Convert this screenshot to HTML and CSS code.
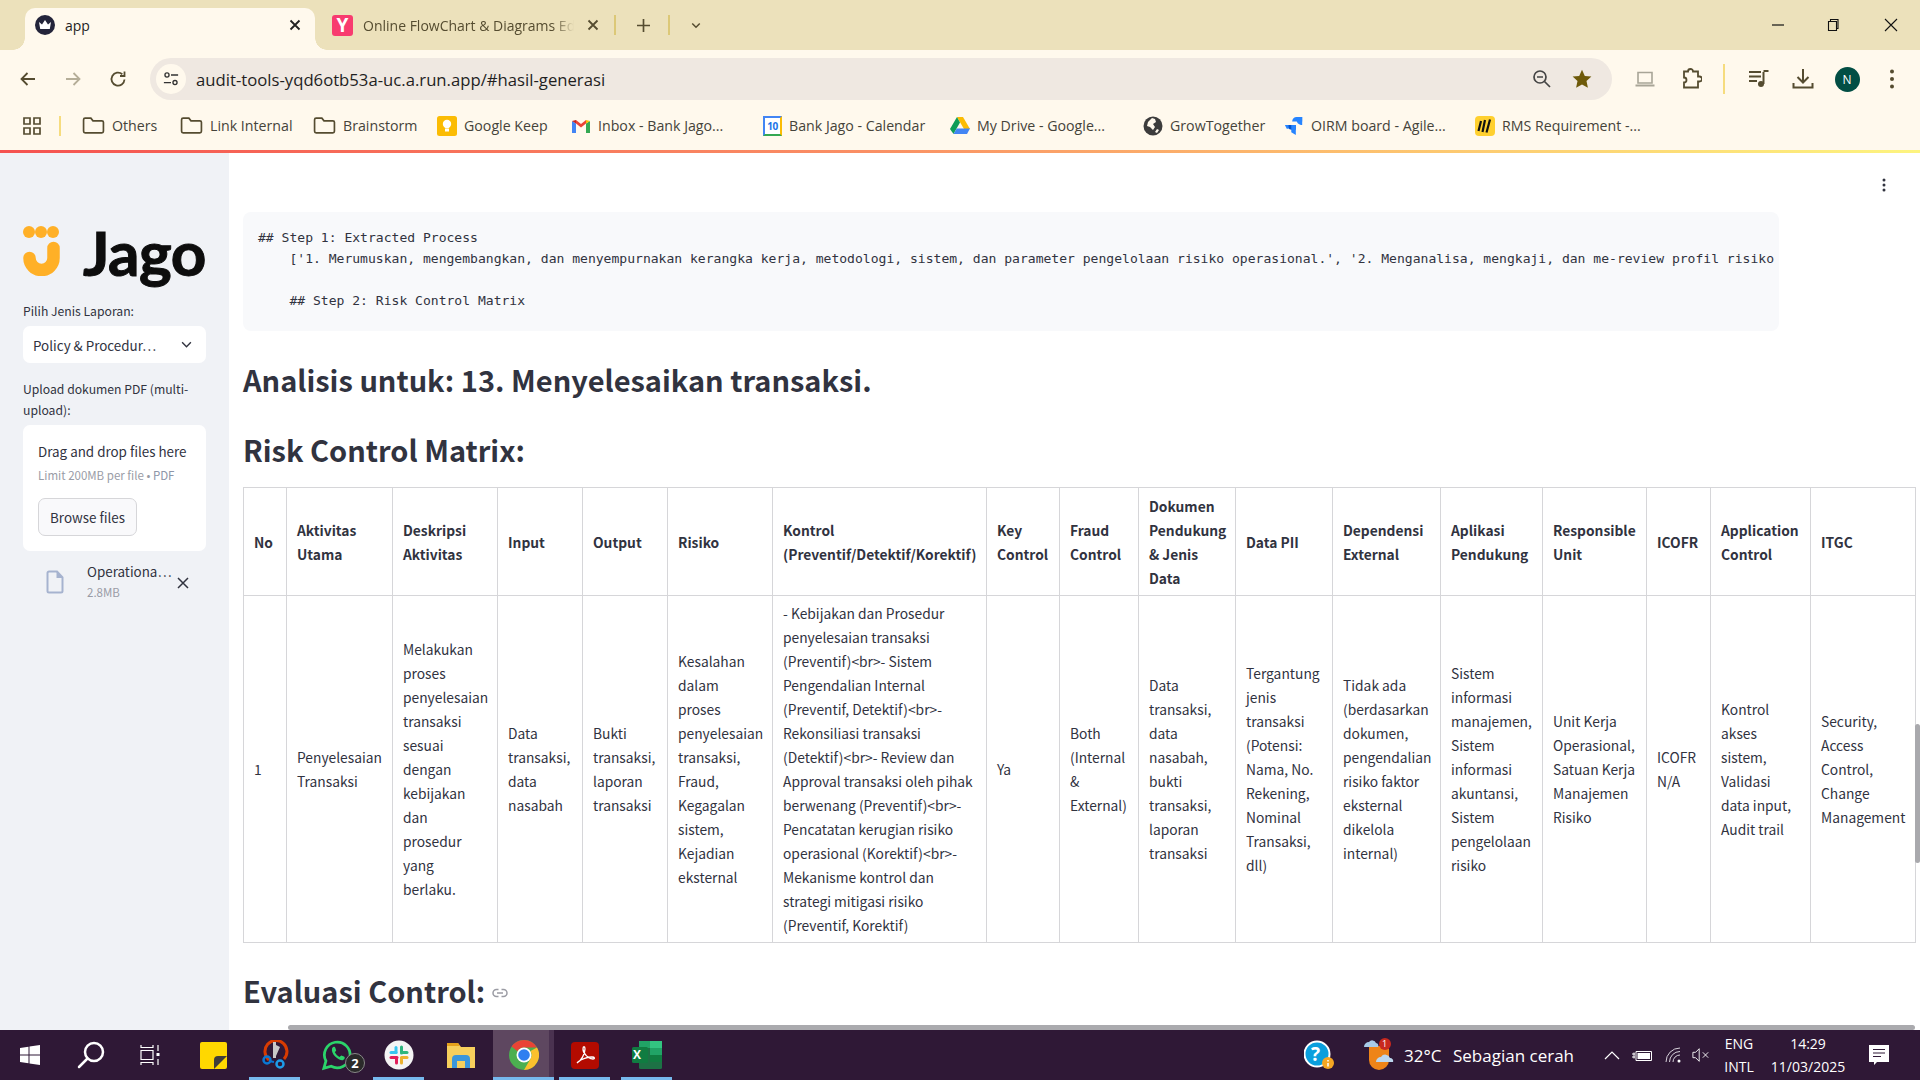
FILE: index.html
```html
<!DOCTYPE html>
<html lang="id">
<head>
<meta charset="utf-8">
<title>app</title>
<link rel="stylesheet" href="styles.css">
</head>
<body>
<header class="browser">
  <div class="tabstrip">
    <div class="tab tab-active">
      <svg class="fav" viewBox="0 0 20 20"><circle cx="10" cy="10" r="10" fill="#23243a"/><path d="M4 7l3 2.400L10 5l3 4.400L16 7l-1.200 7H5.200z" fill="#fff"/></svg>
      <span class="tab-title">app</span>
      <svg class="tab-x" viewBox="0 0 12 12"><path d="M1.500 1.500l9 9M10.500 1.500l-9 9" stroke="#222" stroke-width="1.800" fill="none"/></svg>
    </div>
    <div class="tab tab-other">
      <span class="fav-y">Y</span>
      <span class="tab-title tab-fade">Online FlowChart &amp; Diagrams Editor</span>
      <svg class="tab-x" viewBox="0 0 12 12"><path d="M1.500 1.500l9 9M10.500 1.500l-9 9" stroke="#554c30" stroke-width="1.800" fill="none"/></svg>
    </div>
    <span class="strip-div"></span>
    <svg class="strip-plus" viewBox="0 0 14 14"><path d="M7 0v14M0 7h14" stroke="#554c30" stroke-width="1.800"/></svg>
    <span class="strip-div"></span>
    <svg class="strip-chev" viewBox="0 0 12 8"><path d="M1.500 1.500L6 6l4.500-4.500" stroke="#554c30" stroke-width="1.800" fill="none"/></svg>
    <div class="winctl">
      <svg class="win-btn" viewBox="0 0 14 14"><path d="M1 7h12" stroke="#111" stroke-width="1.200"/></svg>
      <svg class="win-btn" viewBox="0 0 14 14"><path d="M2.500 3.500h8v9h-8zM4.500 3.500v-2h7.500v9h-1.500" stroke="#111" stroke-width="1.100" fill="none"/></svg>
      <svg class="win-btn" viewBox="0 0 14 14"><path d="M1 1l12 12M13 1L1 13" stroke="#111" stroke-width="1.100"/></svg>
    </div>
  </div>
  <div class="toolbar">
    <svg class="nav" viewBox="0 0 18 18"><path d="M16 9H3M8.500 3L2.500 9l6 6" stroke="#554c30" stroke-width="1.800" fill="none"/></svg>
    <svg class="nav" viewBox="0 0 18 18"><path d="M2 9h13M9.500 3l6 6-6 6" stroke="#b5ae98" stroke-width="1.800" fill="none"/></svg>
    <svg class="nav" viewBox="0 0 18 18"><path d="M15.500 9.500A6.500 6.500 0 1 1 13.300 4.200M15.500 1.500v4.500H11" stroke="#554c30" stroke-width="1.800" fill="none"/></svg>
    <div class="omnibox">
      <span class="site-btn"><svg viewBox="0 0 18 18"><circle cx="4.500" cy="4.500" r="2.300" fill="none" stroke="#333" stroke-width="1.500"/><path d="M9 4.500h8M1 13h8" stroke="#333" stroke-width="1.500"/><circle cx="13.500" cy="13" r="2.300" fill="none" stroke="#333" stroke-width="1.500"/></svg></span>
      <span class="url">audit-tools-yqd6otb53a-uc.a.run.app/#hasil-generasi</span>
      <svg class="omni-zoom" viewBox="0 0 20 20"><circle cx="8" cy="8" r="6" fill="none" stroke="#444" stroke-width="1.700"/><path d="M5 8h6M12.500 12.500L18 18" stroke="#444" stroke-width="1.700"/></svg>
      <svg class="omni-star" viewBox="0 0 20 20"><path d="M10 .8l2.800 6.100 6.600.7-4.900 4.500 1.400 6.600L10 15.400l-5.900 3.300 1.400-6.600L.6 7.600l6.600-.7z" fill="#6e5a0a"/></svg>
    </div>
    <div class="tool-icons">
      <svg class="tool tool-laptop" viewBox="0 0 22 18"><path d="M4 2.500h14v10.500H4z" fill="none" stroke="#a8a597" stroke-width="1.600"/><path d="M1.500 15.500h19" stroke="#a8a597" stroke-width="2"/></svg>
      <svg class="tool" viewBox="0 0 22 22"><path d="M8 3.500a2.500 2.500 0 0 1 5 0h5v5h1.500a2 2 0 0 1 0 5H18v6H4v-5a2.500 2.500 0 0 0 0-5V3.500z" fill="none" stroke="#554c30" stroke-width="1.800"/></svg>
      <span class="tool-div"></span>
      <svg class="tool tool-media" viewBox="0 0 22 22"><path d="M1 4h12M1 8.500h12M1 13h8" stroke="#554c30" stroke-width="2"/><path d="M15.500 4v12" stroke="#554c30" stroke-width="2"/><path d="M15.500 3h5" stroke="#554c30" stroke-width="2"/><circle cx="13" cy="16" r="3" fill="#554c30"/></svg>
      <svg class="tool tool-dl" viewBox="0 0 22 22"><path d="M11 1v13M5.500 9l5.500 5.500L16.500 9" stroke="#554c30" stroke-width="2" fill="none"/><path d="M1.500 15v4.500h19V15" stroke="#554c30" stroke-width="2" fill="none"/></svg>
      <span class="avatar">N</span>
      <svg class="tool tool-dots" viewBox="0 0 6 22"><circle cx="3" cy="3.500" r="2" fill="#554c30"/><circle cx="3" cy="11" r="2" fill="#554c30"/><circle cx="3" cy="18.500" r="2" fill="#554c30"/></svg>
    </div>
  </div>
  <nav class="bookmarks">
    <svg class="bm-apps" viewBox="0 0 18 18"><path d="M1 1h6v6H1zM11 1h6v6h-6zM1 11h6v6H1zM11 11h6v6h-6z" fill="none" stroke="#554c30" stroke-width="1.700"/></svg>
    <span class="bm-div"></span>
    <a class="bm bm-a"><svg class="bm-ico folder" viewBox="0 0 22 18"><path d="M1.500 3.500a1.500 1.500 0 0 1 1.500-1.500h5.500l2 2.500H19a1.500 1.500 0 0 1 1.500 1.500v8.500a1.500 1.500 0 0 1-1.500 1.500H3a1.500 1.500 0 0 1-1.500-1.500z" fill="none" stroke="#554c30" stroke-width="1.600"/></svg>Others</a>
    <a class="bm bm-b"><svg class="bm-ico folder" viewBox="0 0 22 18"><path d="M1.500 3.500a1.500 1.500 0 0 1 1.500-1.500h5.500l2 2.500H19a1.500 1.500 0 0 1 1.500 1.500v8.500a1.500 1.500 0 0 1-1.500 1.500H3a1.500 1.500 0 0 1-1.500-1.500z" fill="none" stroke="#554c30" stroke-width="1.600"/></svg>Link Internal</a>
    <a class="bm bm-c"><svg class="bm-ico folder" viewBox="0 0 22 18"><path d="M1.500 3.500a1.500 1.500 0 0 1 1.500-1.500h5.500l2 2.500H19a1.500 1.500 0 0 1 1.500 1.500v8.500a1.500 1.500 0 0 1-1.500 1.500H3a1.500 1.500 0 0 1-1.500-1.500z" fill="none" stroke="#554c30" stroke-width="1.600"/></svg>Brainstorm</a>
    <a class="bm bm-d"><svg class="bm-ico" viewBox="0 0 20 20"><rect width="20" height="20" rx="2.500" fill="#fbbc04"/><circle cx="10" cy="8" r="4.200" fill="#fff"/><rect x="8" y="12.500" width="4" height="3" fill="#fff"/></svg>Google Keep</a>
    <a class="bm bm-e"><svg class="bm-ico" viewBox="0 0 20 16"><path d="M1 15V3l4 2.500V15z" fill="#4285f4"/><path d="M19 15V3l-4 2.500V15z" fill="#34a853"/><path d="M5 5.500V2L10 6l5-4v3.500L10 9.500z" fill="#ea4335"/><path d="M1 3l4-1v3.500z" fill="#c5221f"/><path d="M19 3l-4-1v3.500z" fill="#fbbc04"/></svg>Inbox - Bank Jago...</a>
    <a class="bm bm-f"><span class="bm-cal">10</span>Bank Jago - Calendar</a>
    <a class="bm bm-g"><svg class="bm-ico" viewBox="0 0 20 18"><path d="M7 0h6l7 12h-6z" fill="#fbbc04"/><path d="M7 0l3 5.500L3.500 17 0 12z" fill="#0f9d58"/><path d="M3.500 17l3.200-5.500H20L17 17z" fill="#4285f4"/></svg>My Drive - Google...</a>
    <a class="bm bm-h"><svg class="bm-ico" viewBox="0 0 20 20"><circle cx="10" cy="10" r="9.500" fill="#3c3c3c"/><path d="M9 2l3 1 1 3-3 2 2 3-2 3-3-3-3-1 1-4zM14 13l2 1-2 3-2-1z" fill="#fff9ed"/></svg>GrowTogether</a>
    <a class="bm bm-i"><svg class="bm-ico" viewBox="0 0 20 22"><path d="M8 6h11V1l-6 0c-3 0-5 2-5 5z" fill="#2684ff"/><path d="M13 1h6v9c-3 0-6-2-6-5z" fill="#2684ff"/><path d="M3 10h9v5H7c-3 0-4-2-4-5z" fill="#0052cc"/><path d="M7 10h5v11l-5-3z" fill="#2684ff"/><path d="M0 10h4v4H2z" fill="#2684ff"/></svg>OIRM board - Agile...</a>
    <a class="bm bm-j"><svg class="bm-ico" viewBox="0 0 20 20"><rect width="20" height="20" rx="4" fill="#ffd02f"/><path d="M6 5L3.500 15M10 4L7.500 16M15 3.500L11.500 16.500" stroke="#111" stroke-width="2.200"/></svg>RMS Requirement -...</a>
  </nav>
  <div class="loadbar"></div>
</header>

<div class="app">
  <aside class="sidebar">
    <div class="logo">
      <svg class="logo-mark" viewBox="0 0 37 50"><circle cx="6" cy="6" r="6" fill="#ffb027"/><circle cx="18" cy="6" r="6" fill="#ffb027"/><circle cx="30" cy="6" r="6" fill="#ffb027"/><path d="M30.500 22v10a12 12 0 0 1-24 0" fill="none" stroke="#ffb027" stroke-width="12.500" stroke-linecap="round"/></svg>
      <span class="logo-word">Jago</span>
    </div>
    <label class="field-label">Pilih Jenis Laporan:</label>
    <div class="select">
      <span>Policy &amp; Procedur…</span>
      <svg viewBox="0 0 12 8"><path d="M1 1.500L6 6.500l5-5" stroke="#31333f" stroke-width="1.600" fill="none"/></svg>
    </div>
    <label class="field-label upload-label">Upload dokumen PDF (multi-upload):</label>
    <div class="dropzone">
      <div class="drop-title">Drag and drop files here</div>
      <div class="drop-sub">Limit 200MB per file • <span class="drop-pdf">PDF</span></div>
      <button class="browse">Browse files</button>
    </div>
    <div class="file-row">
      <svg class="file-ico" viewBox="0 0 18 24"><path d="M1.500 3a1.500 1.500 0 0 1 1.500-1.500h8l5.500 6V21a1.500 1.500 0 0 1-1.500 1.500H3A1.500 1.500 0 0 1 1.500 21z" fill="none" stroke="#a6b3cf" stroke-width="2"/><path d="M10.500 1.500v6.500h6.500z" fill="#a6b3cf"/></svg>
      <div class="file-meta">
        <div class="file-name">Operationa…</div>
        <div class="file-size">2.8MB</div>
      </div>
      <svg class="file-x" viewBox="0 0 12 12"><path d="M1 1l10 10M11 1L1 11" stroke="#31333f" stroke-width="1.500"/></svg>
    </div>
  </aside>

  <main class="main">
    <svg class="main-menu" viewBox="0 0 4 14"><circle cx="2" cy="2" r="1.500" fill="#31333f"/><circle cx="2" cy="7" r="1.500" fill="#31333f"/><circle cx="2" cy="12" r="1.500" fill="#31333f"/></svg>
    <pre class="code">## Step 1: Extracted Process
    ['1. Merumuskan, mengembangkan, dan menyempurnakan kerangka kerja, metodologi, sistem, dan parameter pengelolaan risiko operasional.', '2. Menganalisa, mengkaji, dan me-review profil risiko

    ## Step 2: Risk Control Matrix</pre>
    <h3 class="h-analisis">Analisis untuk: 13. Menyelesaikan transaksi.</h3>
    <h3 class="h-risk">Risk Control Matrix:</h3>
    <table class="rcm">
      <colgroup>
        <col class="c1"><col class="c2"><col class="c3"><col class="c4"><col class="c5"><col class="c6"><col class="c7"><col class="c8"><col class="c9"><col class="c10"><col class="c11"><col class="c12"><col class="c13"><col class="c14"><col class="c15"><col class="c16"><col class="c17">
      </colgroup>
      <thead>
        <tr>
          <th>No</th><th>Aktivitas Utama</th><th>Deskripsi Aktivitas</th><th>Input</th><th>Output</th><th>Risiko</th><th>Kontrol (Preventif/Detektif/Korektif)</th><th>Key Control</th><th>Fraud Control</th><th>Dokumen Pendukung &amp; Jenis Data</th><th>Data PII</th><th>Dependensi External</th><th>Aplikasi Pendukung</th><th>Responsible Unit</th><th>ICOFR</th><th>Application Control</th><th>ITGC</th>
        </tr>
      </thead>
      <tbody>
        <tr>
          <td>1</td>
          <td>Penyelesaian Transaksi</td>
          <td>Melakukan proses penyelesaian transaksi sesuai dengan kebijakan dan prosedur yang berlaku.</td>
          <td>Data transaksi, data nasabah</td>
          <td>Bukti transaksi, laporan transaksi</td>
          <td>Kesalahan dalam proses penyelesaian transaksi, Fraud, Kegagalan sistem, Kejadian eksternal</td>
          <td>- Kebijakan dan Prosedur penyelesaian transaksi (Preventif)&lt;br&gt;- Sistem Pengendalian Internal (Preventif, Detektif)&lt;br&gt;- Rekonsiliasi transaksi (Detektif)&lt;br&gt;- Review dan Approval transaksi oleh pihak berwenang (Preventif)&lt;br&gt;- Pencatatan kerugian risiko operasional (Korektif)&lt;br&gt;- Mekanisme kontrol dan strategi mitigasi risiko (Preventif, Korektif)</td>
          <td>Ya</td>
          <td>Both (Internal &amp; External)</td>
          <td>Data transaksi, data nasabah, bukti transaksi, laporan transaksi</td>
          <td>Tergantung jenis transaksi (Potensi: Nama, No. Rekening, Nominal Transaksi, dll)</td>
          <td>Tidak ada (berdasarkan dokumen, pengendalian risiko faktor eksternal dikelola internal)</td>
          <td>Sistem informasi manajemen, Sistem informasi akuntansi, Sistem pengelolaan risiko</td>
          <td>Unit Kerja Operasional, Satuan Kerja Manajemen Risiko</td>
          <td>ICOFR N/A</td>
          <td>Kontrol akses sistem, Validasi data input, Audit trail</td>
          <td>Security, Access Control, Change Management</td>
        </tr>
      </tbody>
    </table>
    <h3 class="h-eval">Evaluasi Control: <svg class="anchor" viewBox="0 0 16 10"><path d="M6.500 1.500H4.500a3.500 3.500 0 0 0 0 7h2M9.500 1.500h2a3.500 3.500 0 0 1 0 7h-2M5 5h6" fill="none" stroke="#9a9ba3" stroke-width="1.500"/></svg></h3>
    <div class="scroll-h"></div>
    <div class="scroll-v"></div>
  </main>
</div>

<footer class="taskbar">
  <span class="tb tb-start"><svg viewBox="0 0 20 20"><path d="M0 3l8.500-1.200v7.700H0zM9.500 1.600L20 0v9.500H9.500zM0 10.500h8.500v7.700L0 17zM9.500 10.500H20V20L9.500 18.400z" fill="#fff"/></svg></span>
  <span class="tb tb-search"><svg viewBox="0 0 28 28"><circle cx="17" cy="11" r="9" fill="none" stroke="#fff" stroke-width="2.500"/><path d="M10.500 17.500L2 26" stroke="#fff" stroke-width="2.500" stroke-linecap="round"/></svg></span>
  <span class="tb tb-view"><svg viewBox="0 0 20 20"><path d="M1 0v2.500h12V0M1 20v-2.500h12V20M1 5.500h12v9H1z" fill="none" stroke="#fff" stroke-width="1.200"/><path d="M18 0v6M18 14v6" stroke="#fff" stroke-width="1.200"/><rect x="16.500" y="8" width="3" height="3" fill="#fff"/></svg></span>
  <span class="tb tb-sticky"><svg viewBox="0 0 27 27"><rect width="27" height="27" rx="2" fill="#ffd800"/><path d="M14 27V18a4 4 0 0 1 4-4h9L14 27z" fill="#3f3d3a"/></svg></span>
  <span class="tb tb-snip tb-open"><svg viewBox="0 0 28 30"><path d="M8 20A11 11 0 1 1 23 19" fill="none" stroke="#d83b01" stroke-width="3"/><path d="M12 2h3v16h-3zM15 5l4 2-4 9z" fill="#c8c8c8"/><circle cx="6" cy="20" r="3.500" fill="none" stroke="#0a78d4" stroke-width="2.500"/><circle cx="19" cy="24" r="3.500" fill="none" stroke="#1e9ce8" stroke-width="2.500"/><path d="M8 21l5 1" stroke="#0a78d4" stroke-width="2"/></svg></span>
  <span class="tb tb-wa"><svg viewBox="0 0 36 36"><path d="M2 32l2.300-8A14 14 0 1 1 10 29.700z" fill="none" stroke="#2bd46a" stroke-width="3"/><path d="M11 10c1.500-2 3-2 3.500-.5l1 3-1.500 2c1 2 3 4 5 5l2-1.500 3 1c1.500 1 1 2.500-1 4-3 1.500-14-6-12-13z" fill="#2bd46a"/></svg><span class="wa-badge">2</span></span>
  <span class="tb tb-slack tb-open"><svg viewBox="0 0 30 30"><circle cx="15" cy="15" r="14.500" fill="#f4f4f4"/><path d="M12 7.500v5" stroke="#36c5f0" stroke-width="3" stroke-linecap="round"/><path d="M7 12.500h5" stroke="#36c5f0" stroke-width="3" stroke-linecap="round"/><path d="M17.500 7v6" stroke="#2eb67d" stroke-width="3" stroke-linecap="round"/><path d="M18 12.500h5" stroke="#2eb67d" stroke-width="3" stroke-linecap="round"/><path d="M7 17.500h6" stroke="#e01e5a" stroke-width="3" stroke-linecap="round"/><path d="M12.500 18v5" stroke="#e01e5a" stroke-width="3" stroke-linecap="round"/><path d="M17.500 17.500H23" stroke="#ecb22e" stroke-width="3" stroke-linecap="round"/><path d="M17.500 18v5" stroke="#ecb22e" stroke-width="3" stroke-linecap="round"/></svg></span>
  <span class="tb tb-folder"><svg viewBox="0 0 28 27"><path d="M0 1h11l3 4h14v21H0z" fill="#f7cf5c"/><path d="M0 1h11l2 3H0z" fill="#e5a11c"/><path d="M5 26V17a4 4 0 0 1 4-4h10a4 4 0 0 1 4 4v9h-5v-7h-8v7z" fill="#3b96db"/></svg></span>
  <span class="tb tb-chrome tb-open tb-active"><svg viewBox="0 0 30 30"><circle cx="15" cy="15" r="15" fill="#4caf50"/><path d="M15 0a15 15 0 0 1 13 7.500H15A7.500 7.500 0 0 0 8.500 11.200L2.600 6.500A15 15 0 0 1 15 0z" fill="#ea4335"/><path d="M28 7.500A15 15 0 0 1 15 30l6.500-11.300A7.500 7.500 0 0 0 21.500 11z" fill="#fbc02d"/><circle cx="15" cy="15" r="7.500" fill="#fff"/><circle cx="15" cy="15" r="5.800" fill="#2f7ff0"/></svg></span>
  <span class="tb tb-acro tb-open"><svg viewBox="0 0 28 27"><rect width="28" height="27" rx="4" fill="#b30b00"/><path d="M6 21c4-2 8-9 8-14 0-3-2-3-2 0 0 5 6 10 10 10 2 0 2-2-1-2-4 0-11 2-14 5z" fill="none" stroke="#fff" stroke-width="1.300"/></svg></span>
  <span class="tb tb-excel tb-open"><svg viewBox="0 0 30 30"><rect x="7" y="1" width="23" height="28" rx="1.500" fill="#1d7145"/><rect x="18" y="1" width="12" height="7" fill="#33c481"/><rect x="7" y="1" width="11" height="7" fill="#21a366"/><rect x="18" y="8" width="12" height="7" fill="#21a366"/><rect x="18" y="15" width="12" height="7" fill="#107c41"/><rect x="0" y="7" width="16" height="16" rx="1.500" fill="#107c41"/></svg><span class="xl-x">X</span></span>
  <div class="tray">
    <span class="help"><svg viewBox="0 0 30 30"><circle cx="13" cy="14" r="12.500" fill="#0a9fdd" stroke="#fff" stroke-width="2"/><circle cx="24" cy="23" r="6" fill="#f5a623"/><path d="M24 20v1.500M24 23v3.500" stroke="#fff" stroke-width="1.500"/></svg><span class="help-q">?</span></span>
    <span class="weather"><svg viewBox="0 0 30 34"><path d="M5 8h20v14a10 10 0 0 1-20 0z" fill="#ee8418"/><circle cx="21" cy="6" r="6" fill="#c8281e"/><path d="M0 9a5 5 0 0 1 5-5 4 4 0 0 1 7 1 3 3 0 0 1 2 4z" fill="#a7cbe8"/><path d="M12 24a5 5 0 0 1 5-5 5 5 0 0 1 9 1 3 3 0 0 1 3 4z" fill="#bcd7ee"/></svg><span class="w-badge">1</span></span>
    <span class="temp">32°C</span>
    <span class="wtext">Sebagian cerah</span>
    <svg class="t-caret" viewBox="0 0 16 9"><path d="M1 8l7-7 7 7" fill="none" stroke="#fff" stroke-width="1.200"/></svg>
    <svg class="t-batt" viewBox="0 0 20 13"><path d="M4 2.500h15.500v9H4z" fill="none" stroke="#fff"/><rect x="5.500" y="4" width="12.500" height="6" fill="#fff"/><path d="M0 5h3M0 8h3M2 3.500v6" stroke="#fff"/></svg>
    <svg class="t-wifi" viewBox="0 0 16 16"><path d="M1 15A14 14 0 0 1 15 1M4.500 15A10.500 10.500 0 0 1 15 4.500M8 15a7 7 0 0 1 7-7" fill="none" stroke="#d9d3dc"/><circle cx="14" cy="14" r="1.500" fill="#fff"/></svg>
    <svg class="t-vol" viewBox="0 0 20 16"><path d="M1 5h3l4-4v14l-4-4H1z" fill="none" stroke="#fff"/><path d="M12 5l6 6M18 5l-6 6" stroke="#fff"/></svg>
    <div class="lang"><span>ENG</span><span>INTL</span></div>
    <div class="clock"><span>14:29</span><span>11/03/2025</span></div>
    <svg class="t-note" viewBox="0 0 20 21"><path d="M0 0h20v17H8l-3 3v-3H0z" fill="#fff"/><path d="M4 4.500h12M4 8h12M4 11.500h8" stroke="#2f1836"/></svg>
  </div>
</footer>
</body>
</html>
```

FILE: styles.css
```css
* { box-sizing: border-box; }
html, body { margin: 0; height: 100%; }
body {
  width: 1920px; height: 1080px; overflow: hidden;
  display: flex; flex-direction: column;
  font-family: "Noto Sans CJK JP", "Noto Sans", sans-serif;
  color: #31333f; background: #fff;
}
svg { display: block; flex: none; }

/* Browser chrome */
.browser { flex: none; height: 153px; background: #fff9ed; font-family: "Open Sans", "Noto Sans", sans-serif; }
.tabstrip { height: 50px; background: #ece1bb; display: flex; padding: 8px 0 0 25px; align-items: stretch; }
.tab { display: flex; align-items: center; position: relative; flex: none; padding-bottom: 8px; }
.tab-active { width: 290px; background: #fff9ed; border-radius: 10px 10px 0 0; padding-left: 10px; }
.tab-active::before, .tab-active::after { content: ""; position: absolute; bottom: 0; width: 12px; height: 12px; }
.tab-active::before { left: -12px; background: radial-gradient(circle at 0 0, transparent 11.500px, #fff9ed 12px); }
.tab-active::after { right: -12px; background: radial-gradient(circle at 100% 0, transparent 11.500px, #fff9ed 12px); }
.fav { width: 20px; height: 20px; margin-right: 10px; }
.tab-title { font-size: 14px; color: #1f1f1f; flex: 1; white-space: nowrap; overflow: hidden; }
.tab-x { width: 12px; height: 12px; margin-right: 14px; }
.tab-other { width: 284px; padding-left: 17px; }
.tab-other .tab-x { margin-right: 0; margin-left: 13px; }
.tab-fade { color: #554c30; -webkit-mask-image: linear-gradient(90deg, #000 90%, transparent 100%); mask-image: linear-gradient(90deg, #000 90%, transparent 100%); }
.fav-y { width: 21px; height: 21px; margin-right: 10px; background: #f83b6f; color: #fff; border-radius: 3px; font: 700 19px/21px "Open Sans", sans-serif; text-align: center; }
.strip-div { width: 2px; height: 20px; background: #dcc877; margin-top: 7px; }
.strip-plus { width: 13px; height: 13px; margin: 11px 18px 0 21px; }
.strip-chev { width: 10px; height: 7px; margin: 14px 0 0 21px; }
.tab-other + .strip-div { margin-left: 15px; }
.winctl { margin-left: auto; display: flex; gap: 41px; padding: 10px 22px 0 0; }
.win-btn { width: 14px; height: 14px; }
.win-btn + .win-btn + .win-btn { margin-left: 3px; }

.toolbar { height: 50px; background: #fff9ed; border-radius: 10px 10px 0 0; display: flex; align-items: center; padding: 0 0 0 5px; position: relative; }
.nav { width: 18px; height: 18px; margin: 8px 13.500px 0; }
.omnibox { width: 1462px; height: 42px; margin: 8px 0 0 10px; background: #efe8e1; border-radius: 21px; display: flex; align-items: center; padding-left: 6px; flex: none; }
.site-btn { width: 30px; height: 30px; border-radius: 50%; background: #fff9ed; display: flex; align-items: center; justify-content: center; }
.site-btn svg { width: 16px; height: 16px; }
.url { font-size: 16.700px; color: #1f1f1f; margin-left: 10px; flex: 1; }
.omni-zoom { width: 20px; height: 20px; margin-right: 20px; }
.omni-star { width: 20px; height: 20px; margin-right: 20px; }
.tool-icons { display: flex; align-items: center; margin-top: 8px; margin-left: 21.500px; }
.tool { width: 22px; height: 22px; }
.tool-laptop { height: 18px; margin-right: 24px; }
.tool-div { width: 2px; height: 30px; background: #f6dc7e; margin: 0 22.500px 0 21.500px; }
.tool-dl { margin: 0 21px 0 22px; }
.tool-dots { width: 6px; margin-left: 29px; }
.avatar { width: 25px; height: 25px; border-radius: 50%; background: #024e44; color: #fff; font-size: 12px; text-align: center; line-height: 25px; flex: none; }

.bookmarks { height: 48px; display: flex; align-items: center; padding-left: 23px; padding-top: 3px; }
.bm-apps { width: 18px; height: 18px; }
.bm-div { width: 2px; height: 20px; background: #f6dc7e; margin: 0 21px 0 18px; }
.bm { display: flex; align-items: center; gap: 7px; font-size: 14.200px; color: #45433a; flex: none; white-space: nowrap; }
.bm-ico { width: 20px; height: 20px; }
.folder { width: 23px; height: 19px; }
.bm-a { width: 98px; } .bm-b { width: 133px; } .bm-c { width: 124px; } .bm-d { width: 134px; }
.bm-e { width: 192px; } .bm-f { width: 187px; } .bm-g { width: 193px; } .bm-h { width: 141px; }
.bm-i { width: 191px; }
.bm-cal { width: 19px; height: 20px; border: 2px solid #4285f4; border-bottom-color: #34a853; border-right-color: #fbbc04; background: #fff; color: #1a73e8; font-size: 10px; font-weight: 700; text-align: center; line-height: 16px; letter-spacing: -.5px; }
.loadbar { height: 3px; margin-top: 2px; background: linear-gradient(90deg, #f55250 0%, #fa8f64 45%, #fdc870 75%, #fdf47f 100%); }

/* App */
.app { flex: 1; min-height: 0; display: flex; overflow: hidden; }
.sidebar { width: 229px; flex: none; background: #f0f2f6; padding: 73px 23px 0; font-size: 12px; }
.logo { display: flex; align-items: flex-start; height: 73px; }
.logo-mark { width: 37px; height: 50px; }
.logo-word { font: 700 62px/58px "Lato", sans-serif; color: #0d0d0d; margin: -3px 0 0 23px; -webkit-text-stroke: 1px #0d0d0d; letter-spacing: -.5px; }
.field-label { display: block; font-size: 12.200px; line-height: 21px; color: #31333f; margin-top: 2px; }
.select { height: 37px; margin-top: 4px; background: #fff; border-radius: 7px; display: flex; align-items: center; justify-content: space-between; padding: 0 14px 0 10px; font-size: 13.400px; }
.select svg { width: 11px; height: 7px; }
.upload-label { margin-top: 16px; }
.dropzone { margin-top: 4px; height: 126px; background: #fff; border-radius: 7px; padding: 15px 15px 0; }
.drop-title { font-size: 13.400px; line-height: 22px; }
.drop-sub { font-size: 11.500px; line-height: 18px; margin-top: 4px; color: #9a9ca6; }
.drop-pdf { color: #8d96a8; }
.browse { display: block; width: 99px; height: 38px; margin-top: 14px; border: 1px solid #d6d6d9; border-radius: 7px; background: #f9f9fb; color: #31333f; font: 13.400px "Noto Sans CJK JP", sans-serif; padding: 0; }
.file-row { display: flex; align-items: center; padding: 10px 0 0 23px; }
.file-ico { width: 18px; height: 24px; }
.file-meta { margin-left: 23px; width: 87px; }
.file-name { font-size: 13.400px; line-height: 21px; white-space: nowrap; }
.file-size { font-size: 11.500px; line-height: 21px; color: #9a9ca6; }
.file-x { width: 12px; height: 12px; margin-left: 3px; margin-top: 2px; }

.main { flex: 1; min-width: 0; position: relative; padding: 59px 0 0 14px; overflow: hidden; }
.main-menu { position: absolute; top: 25px; right: 34px; width: 4px; height: 14px; }
.code { margin: 0; width: 1536px; height: 119px; padding: 15px 2px 0 15px; background: #f8f9fb; border-radius: 8px; font: 13.050px/21px "DejaVu Sans Mono", monospace; color: #31333f; overflow: hidden; white-space: pre; }
h3 { margin: 0; font-weight: 700; font-size: 29px; line-height: 44px; color: #31333f; }
.h-analisis { margin-top: 26px; }
.h-risk { margin-top: 26px; }
.rcm { margin-top: 16px; width: 1672px; border-collapse: collapse; table-layout: fixed; font-size: 13.800px; line-height: 24px; }
.rcm th, .rcm td { border: 1px solid #d6d6d9; padding: 5px 8px 5px 10px; text-align: left; vertical-align: middle; }
.rcm th { font-weight: 700; color: #31333f; height: 108px; }
.rcm td { height: 347px; }
.c1 { width: 43px; } .c2 { width: 106px; } .c3 { width: 105px; } .c4 { width: 85px; } .c5 { width: 85px; }
.c6 { width: 105px; } .c7 { width: 214px; } .c8 { width: 73px; } .c9 { width: 79px; } .c10 { width: 97px; }
.c11 { width: 97px; } .c12 { width: 108px; } .c13 { width: 102px; } .c14 { width: 104px; } .c15 { width: 64px; }
.c16 { width: 100px; } .c17 { width: 105px; }
.h-eval { margin-top: 25px; display: flex; align-items: center; gap: 7px; }
.anchor { width: 16px; height: 10px; margin-top: 6px; }
.scroll-h { position: absolute; left: 59px; right: 5px; bottom: 0; height: 5px; background: #aaaaae; border-radius: 3px; }
.scroll-v { position: absolute; right: 0; top: 571px; width: 5px; height: 139px; background: #a9a9ad; border-radius: 3px; }

/* Taskbar */
.taskbar { flex: none; height: 50px; background: #2f1836; display: flex; align-items: center; color: #fff; font-family: "Open Sans", "Noto Sans", sans-serif; }
.tb { position: relative; flex: none; width: 62px; height: 50px; display: flex; align-items: center; justify-content: center; }
.tb-open::after { content: ""; position: absolute; bottom: 0; left: 5px; right: 6px; height: 3px; background: #76b9ed; }
.tb-start { width: 60px; } .tb-start svg { width: 20px; height: 20px; }
.tb-search { width: 62px; } .tb-search svg { width: 28px; height: 28px; }
.tb-view { width: 56px; margin-right: 4px; } .tb-view svg { width: 20px; height: 20px; }
.tb-sticky { width: 62px; } .tb-sticky svg { width: 27px; height: 27px; }
.tb-snip svg { width: 28px; height: 30px; }
.tb-wa svg { width: 33px; height: 33px; margin-left: 3px; }
.wa-badge { position: absolute; left: 39px; top: 23px; width: 20px; height: 20px; border-radius: 50%; background: #2a2a2a; border: 1px solid #888; font-size: 13px; font-weight: 700; line-height: 18px; text-align: center; }
.tb-slack svg { width: 30px; height: 30px; }
.tb-folder svg { width: 28px; height: 27px; }
.tb-chrome svg { width: 30px; height: 30px; }
.tb-active { background: linear-gradient(90deg, #5e4760 0 56px, #4a3250 56px 62px); width: 61px; margin-left: 1px; }
.tb-active::after { left: 0; right: 0; }
.tb-acro svg { width: 28px; height: 27px; }
.tb-excel svg { width: 30px; height: 30px; }
.xl-x { position: absolute; left: 17px; top: 16px; font-size: 12px; font-weight: 700; line-height: 18px; }
.tray { margin-left: auto; display: flex; align-items: center; height: 50px; flex: none; }
.help { position: relative; width: 30px; height: 30px; display: block; margin-right: 30px; }
.help svg { width: 30px; height: 30px; }
.help-q { position: absolute; left: 7px; top: 2px; font-size: 19px; font-weight: 700; line-height: 24px; color: #fff; }
.weather { position: relative; width: 30px; height: 34px; display: block; margin-right: 10px; }
.weather svg { width: 30px; height: 34px; }
.w-badge { position: absolute; left: 18px; top: 0; font-size: 9px; line-height: 12px; }
.temp { font-size: 17px; width: 49px; }
.wtext { font-size: 17px; width: 151px; white-space: nowrap; }
.t-caret { width: 16px; height: 9px; margin-right: 12px; }
.t-batt { width: 20px; height: 13px; margin-right: 13px; }
.t-wifi { width: 16px; height: 16px; margin-right: 11px; }
.t-vol { width: 18px; height: 16px; }
.lang { width: 44px; margin-left: 7px; display: flex; flex-direction: column; font-size: 14px; line-height: 23px; text-align: center; }
.clock { width: 90px; margin-left: 2px; display: flex; flex-direction: column; font-size: 14px; line-height: 23px; text-align: center; }
.t-note { width: 20px; height: 21px; margin: 0 31px 0 16px; }
```
